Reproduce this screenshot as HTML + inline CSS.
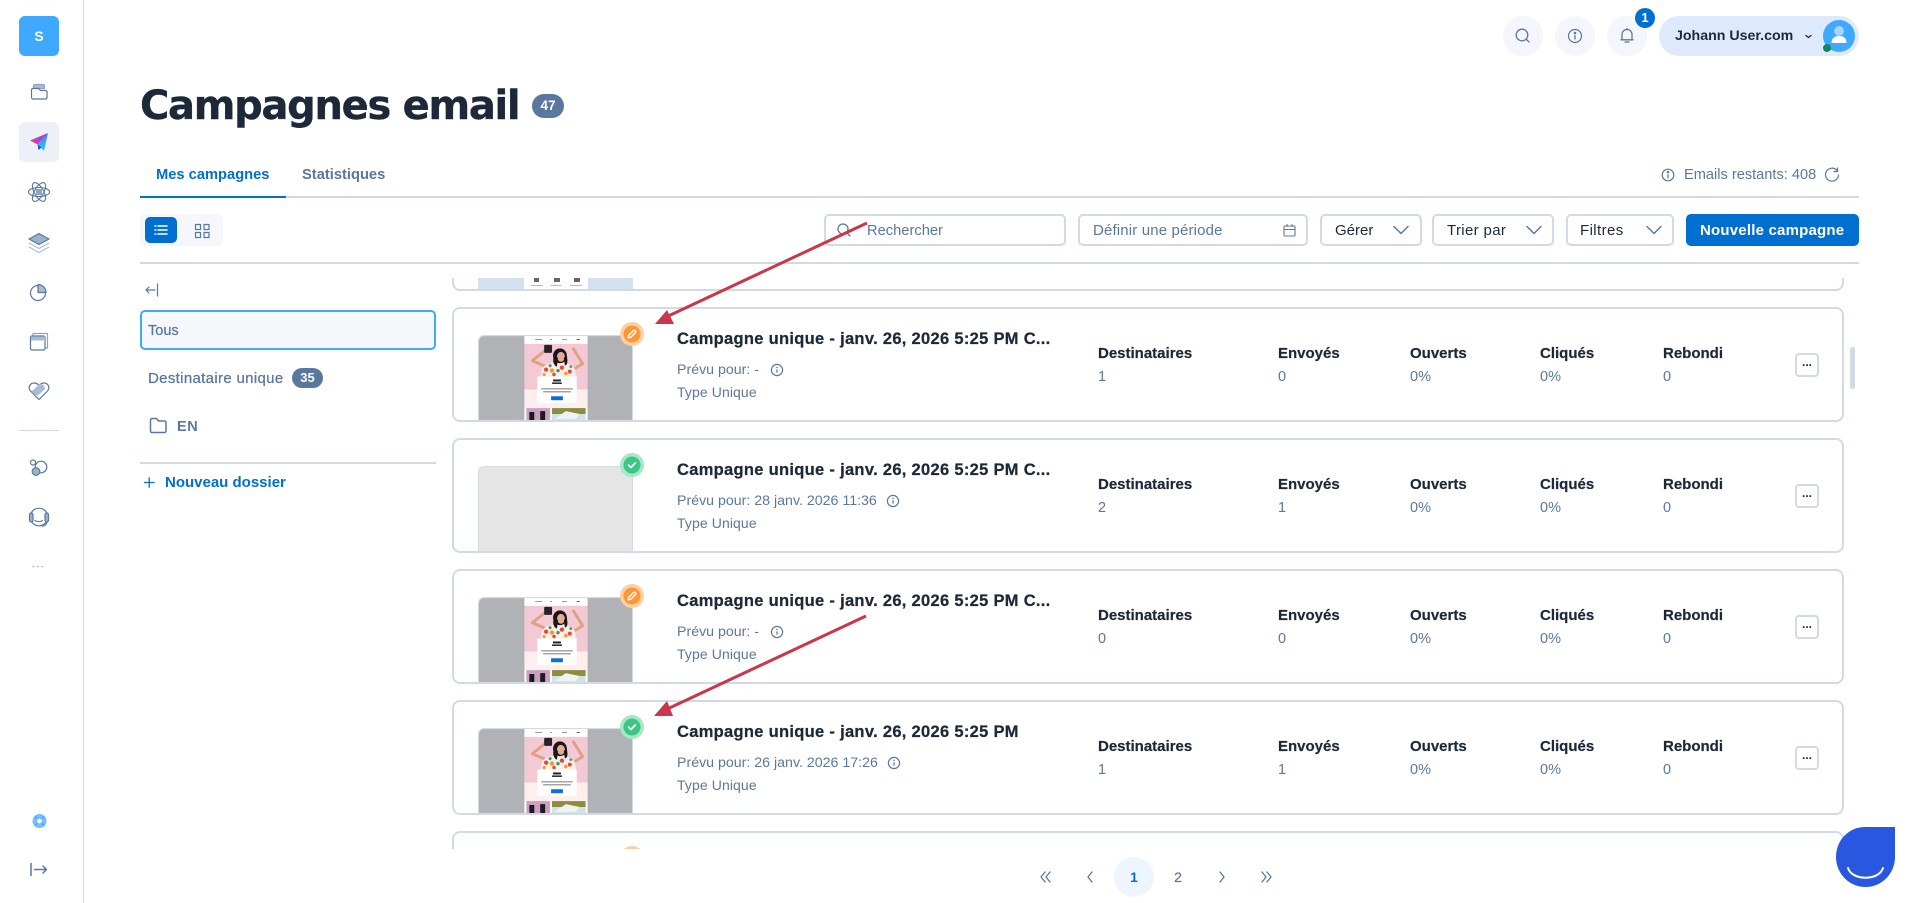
<!DOCTYPE html>
<html lang="fr"><head><meta charset="utf-8"><title>Campagnes email</title>
<style>
*{box-sizing:border-box}
html,body{margin:0;padding:0;width:1910px;height:903px;overflow:hidden;background:#fff;font-family:"Liberation Sans",sans-serif;color:#5a789e}
.t{position:absolute;white-space:nowrap;line-height:20px;height:20px}
.b{font-weight:bold}
.box{position:absolute;border:2px solid #d1dbe6;border-radius:5px;background:#fff}
.line{position:absolute;background:#d1dbe6}
.clip{position:absolute;left:0;top:278px;width:1910px;height:571px;overflow:hidden}
.c{position:absolute;left:452px;width:1392px;height:115px}
.c .bd{position:absolute;inset:0;border:2px solid #d1dbe6;border-radius:8px}
.c .th{position:absolute;left:26px;top:28px;width:155px;height:85px;display:block;border:1px solid #d1dbe6;border-bottom:0;border-radius:6px 0 0 0}
.c .ttl{left:225px;top:22px;font-size:16.5px;letter-spacing:.3px;font-weight:bold;color:#1d2939;-webkit-text-stroke:.25px #1d2939}
.c .s1{left:225px;top:53px;font-size:14.2px;color:#5a789e}
.c .s2{left:225px;top:75px;font-size:14px;letter-spacing:.1px;color:#5a789e}
.c .l{top:37px;font-size:15px;font-weight:bold;color:#1d2939;-webkit-text-stroke:.2px #1d2939}
.c .v{top:60px;font-size:14.5px;color:#5a789e}
.x1{left:646px}.x2{left:826px}.x3{left:958px}.x4{left:1088px}.x5{left:1211px}
.c .k{position:absolute;left:1343px;top:46px;width:24px;height:24px;border:2px solid #d1dbe6;border-radius:4px;background:#fff;color:#1d2939;text-align:center;font-size:12px;line-height:14px;font-weight:bold}
.c .st{position:absolute;left:168px;top:15px;display:block}
.c .in{position:absolute;top:56px;display:block}
.pill{position:absolute;background:#5a789e;color:#fff;font-weight:bold;text-align:center}
</style></head>
<body>
<svg width="0" height="0" style="position:absolute">
<defs>
<filter id="sf" x="-5%" y="-5%" width="110%" height="110%"><feGaussianBlur stdDeviation=".35"/></filter>
<symbol id="m" viewBox="0 0 155 85">
<rect width="155" height="85" fill="#b1b2b5"/>
<rect x="46" width="64" height="8" fill="#fff"/>
<g fill="#9a9a9a"><rect x="57" y="3" width="7" height="1"/><rect x="72" y="3" width="2" height="1"/><rect x="84" y="3" width="5" height="1"/><rect x="99" y="3" width="3" height="1" fill="#555"/></g>
<rect x="46" y="8" width="64" height="46" fill="#f3c9d5"/>
<rect x="46" y="54" width="64" height="19" fill="#ffeeee"/>
<g filter="url(#sf)">
<path d="M68 31 L54 25 L69 13 M97 33 L105 28 L95 12" fill="none" stroke="#dfa184" stroke-width="3" stroke-linejoin="round"/>
<rect x="66" y="9" width="8" height="8" rx="1" fill="#26232a"/>
<path d="M63 42 C62 30 68 27 80 27 C92 27 99 31 98 42 Z" fill="#f7efe8"/>
<g fill="#e5473f"><circle cx="68" cy="34" r="2.200"/><circle cx="84" cy="32" r="2.200"/><circle cx="92" cy="36" r="2"/><circle cx="76" cy="39" r="1.800"/></g>
<g fill="#f19a2d"><circle cx="74" cy="35" r="2.200"/><circle cx="88" cy="38" r="1.800"/><circle cx="66" cy="39" r="1.600"/></g>
<g fill="#3d9c6a"><circle cx="72" cy="30" r="1.600"/><circle cx="80" cy="35" r="1.800"/><circle cx="93" cy="31" r="1.400"/></g>
<ellipse cx="82" cy="20" rx="7" ry="7.500" fill="#1f1718"/>
<ellipse cx="83" cy="21" rx="4" ry="5" fill="#e3ac93"/>
<path d="M76 20 C74 26 76 30 79 31 L80 22Z M89 20 C90 26 90 29 87 30 L86 22Z" fill="#1f1718"/>
</g>
<rect x="59" y="41" width="40" height="27" fill="#fff"/>
<g filter="url(#sf)">
<g fill="#222"><rect x="75" y="44" width="8" height="2"/><rect x="74" y="47" width="10" height="1.500"/></g>
<g fill="#777"><rect x="63" y="53" width="32" height="1"/><rect x="65" y="56" width="28" height="1"/></g>
</g>
<rect x="73" y="61" width="12" height="4" fill="#0d6edb"/>
<rect x="46" y="73" width="64" height="12" fill="#fff"/>
<rect x="48" y="73" width="24" height="12" fill="#cd9fc3"/>
<g filter="url(#sf)">
<path d="M51 85V77h5v8zM62 85V76h5v9z" fill="#1b1a1b"/>
<rect x="74" y="73" width="34" height="6" fill="#8e8c3d"/>
<rect x="74" y="79" width="34" height="6" fill="#cfe2e6"/>
<path d="M76 84 L88 76 L102 79 L98 84Z" fill="#eef3f4"/>
</g>
</symbol>
<symbol id="pen" viewBox="0 0 24 24">
<circle cx="12" cy="12" r="12" fill="#fdd09f"/><circle cx="12" cy="12" r="8.500" fill="#fc973a"/>
<path d="M8.200 15.800l.6-2.600 4.700-4.700a1 1 0 0 1 1.500 0l.5.5a1 1 0 0 1 0 1.500l-4.700 4.700z" fill="none" stroke="#fff" stroke-width="1.400" stroke-linejoin="round"/>
</symbol>
<symbol id="ok" viewBox="0 0 24 24">
<circle cx="12" cy="12" r="12" fill="#a6e7c4"/><circle cx="12" cy="12" r="8.500" fill="#3cc585"/>
<path d="M8.600 12.200l2.400 2.300 4.400-4.600" fill="none" stroke="#fff" stroke-width="1.700" stroke-linecap="round" stroke-linejoin="round"/>
</symbol>
<symbol id="inf" viewBox="0 0 14 14">
<circle cx="7" cy="7" r="5.600" fill="none" stroke="#5a789e" stroke-width="1.200"/>
<path d="M7 6.400v3.200" stroke="#5a789e" stroke-width="1.300"/><circle cx="7" cy="4.400" r=".8" fill="#5a789e"/>
</symbol>
</defs>
</svg>

<!-- sidebar -->
<div class="line" style="left:83px;top:0;width:1px;height:903px"></div>
<div style="position:absolute;left:19px;top:16px;width:40px;height:40px;border-radius:6px;background:#3fa9ff;color:#fff;font-weight:bold;font-size:14px;line-height:40px;text-align:center">S</div>
<div style="position:absolute;left:19px;top:122px;width:40px;height:40px;border-radius:6px;background:#edf0f6"></div>
<div class="line" style="left:19px;top:430px;width:40px;height:1px"></div>

<!-- title -->
<div class="t" style="left:140px;top:81px;height:50px;line-height:50px;font-family:'DejaVu Sans',sans-serif;font-weight:bold;font-size:40px;letter-spacing:-1.3px;-webkit-text-stroke:.4px #1d2939;color:#1d2939">Campagnes email</div>
<div class="pill" style="left:532px;top:94px;width:32px;height:24px;border-radius:12px;font-size:13.5px;line-height:24px">47</div>

<!-- top right -->
<div style="position:absolute;left:1503px;top:16px;width:40px;height:40px;border-radius:50%;background:#f4f6fb"></div>
<div style="position:absolute;left:1555px;top:16px;width:40px;height:40px;border-radius:50%;background:#f4f6fb"></div>
<div style="position:absolute;left:1607px;top:16px;width:40px;height:40px;border-radius:50%;background:#f4f6fb"></div>
<div style="position:absolute;left:1634px;top:7px;width:22px;height:22px;border-radius:50%;background:#fff"></div>
<div style="position:absolute;left:1635px;top:8px;width:20px;height:20px;border-radius:50%;background:#006fcf;color:#fff;font-weight:bold;font-size:13px;line-height:20px;text-align:center">1</div>
<div style="position:absolute;left:1659px;top:16px;width:200px;height:40px;border-radius:20px;background:#deeafc"></div>
<div class="t b" style="left:1675px;top:26px;font-size:14.2px;color:#1d2939">Johann User.com</div>
<div style="position:absolute;left:1823px;top:20px;width:32px;height:32px;border-radius:50%;background:#3fa9ff"></div>

<!-- tabs -->
<div class="t b" style="left:156px;top:165px;font-size:14.7px;color:#006fcf">Mes campagnes</div>
<div class="t b" style="left:302px;top:165px;font-size:14.7px;color:#5a789e">Statistiques</div>
<div class="line" style="left:140px;top:196px;width:1719px;height:2px"></div>
<div style="position:absolute;left:140px;top:196px;width:146px;height:2px;background:#006fcf"></div>
<div class="t" style="left:1684px;top:165px;font-size:14.6px;color:#5a789e">Emails restants: 408</div>

<!-- toolbar -->
<div style="position:absolute;left:140px;top:214px;width:83px;height:32px;border-radius:5px;background:#f5f7fb"></div>
<div style="position:absolute;left:145px;top:217px;width:32px;height:26px;border-radius:5px;background:#006fcf"></div>
<div class="box" style="left:824px;top:214px;width:242px;height:32px"></div>
<div class="t" style="left:867px;top:221px;font-size:14.7px">Rechercher</div>
<div class="box" style="left:1078px;top:214px;width:230px;height:32px"></div>
<div class="t" style="left:1093px;top:221px;font-size:15px;letter-spacing:.15px">Définir une période</div>
<div class="box" style="left:1320px;top:214px;width:102px;height:32px"></div>
<div class="t" style="left:1335px;top:221px;font-size:15px;color:#1d2939">Gérer</div>
<div class="box" style="left:1432px;top:214px;width:122px;height:32px"></div>
<div class="t" style="left:1447px;top:221px;font-size:15px;letter-spacing:.35px;color:#1d2939">Trier par</div>
<div class="box" style="left:1566px;top:214px;width:108px;height:32px"></div>
<div class="t" style="left:1580px;top:221px;font-size:15px;letter-spacing:.4px;color:#1d2939">Filtres</div>
<div style="position:absolute;left:1686px;top:214px;width:173px;height:32px;border-radius:5px;background:#006fcf"></div>
<div class="t b" style="left:1700px;top:221px;font-size:15px;letter-spacing:.2px;color:#fff">Nouvelle campagne</div>
<div class="line" style="left:140px;top:262px;width:1719px;height:2px"></div>

<!-- left panel -->
<div style="position:absolute;left:140px;top:310px;width:296px;height:40px;border:2px solid #3fa9ff;border-radius:5px;background:#f5f7fb"></div>
<div class="t" style="left:148px;top:321px;font-size:14.5px;-webkit-text-stroke:.25px #5a789e">Tous</div>
<div class="t" style="left:148px;top:369px;font-size:15px;letter-spacing:.33px;-webkit-text-stroke:.25px #5a789e">Destinataire unique</div>
<div class="pill" style="left:292px;top:368px;width:31px;height:20px;border-radius:10px;font-size:13px;line-height:20px">35</div>
<div class="t b" style="left:177px;top:417px;font-size:14.5px;letter-spacing:.6px">EN</div>
<div class="line" style="left:140px;top:462px;width:296px;height:2px"></div>
<div class="t b" style="left:165px;top:473px;font-size:15px;color:#006fcf">Nouveau dossier</div>

<!-- list -->
<div class="clip">
  <div class="c" style="top:-102px">
    <div class="bd"></div>
    <div style="position:absolute;left:26px;top:102px;width:155px;height:11px;background:#d3e0ee"></div>
    <div style="position:absolute;left:72px;top:102px;width:64px;height:11px;background:#fff"></div>
    <svg style="position:absolute;left:72px;top:102px" width="64" height="11"><g fill="#666"><rect x="10" y="0" width="5" height="4"/><rect x="30" y="0" width="6" height="4"/><rect x="50" y="0" width="6" height="4"/></g><g fill="#bbb"><rect x="7" y="7" width="12" height="1"/><rect x="27" y="7" width="10" height="1"/><rect x="46" y="7" width="12" height="1"/></g></svg>
  </div>

  <div class="c" style="top:29px">
    <div class="bd"></div>
    <svg class="th"><use href="#m"/></svg>
    <svg class="st" width="24" height="24"><use href="#pen"/></svg>
    <div class="t ttl">Campagne unique - janv. 26, 2026 5:25 PM C...</div>
    <div class="t s1">Prévu pour: -</div><svg class="in" style="left:318px" width="14" height="14"><use href="#inf"/></svg>
    <div class="t s2">Type Unique</div>
    <div class="t l x1">Destinataires</div><div class="t v x1">1</div>
    <div class="t l x2">Envoyés</div><div class="t v x2">0</div>
    <div class="t l x3">Ouverts</div><div class="t v x3">0%</div>
    <div class="t l x4">Cliqués</div><div class="t v x4">0%</div>
    <div class="t l x5">Rebondi</div><div class="t v x5">0</div>
    <div class="k">...</div>
  </div>

  <div class="c" style="top:160px">
    <div class="bd"></div>
    <div class="th" style="background:#e5e5e5"></div>
    <svg class="st" width="24" height="24"><use href="#ok"/></svg>
    <div class="t ttl">Campagne unique - janv. 26, 2026 5:25 PM C...</div>
    <div class="t s1">Prévu pour: 28 janv. 2026 11:36</div><svg class="in" style="left:434px" width="14" height="14"><use href="#inf"/></svg>
    <div class="t s2">Type Unique</div>
    <div class="t l x1">Destinataires</div><div class="t v x1">2</div>
    <div class="t l x2">Envoyés</div><div class="t v x2">1</div>
    <div class="t l x3">Ouverts</div><div class="t v x3">0%</div>
    <div class="t l x4">Cliqués</div><div class="t v x4">0%</div>
    <div class="t l x5">Rebondi</div><div class="t v x5">0</div>
    <div class="k">...</div>
  </div>

  <div class="c" style="top:291px">
    <div class="bd"></div>
    <svg class="th"><use href="#m"/></svg>
    <svg class="st" width="24" height="24"><use href="#pen"/></svg>
    <div class="t ttl">Campagne unique - janv. 26, 2026 5:25 PM C...</div>
    <div class="t s1">Prévu pour: -</div><svg class="in" style="left:318px" width="14" height="14"><use href="#inf"/></svg>
    <div class="t s2">Type Unique</div>
    <div class="t l x1">Destinataires</div><div class="t v x1">0</div>
    <div class="t l x2">Envoyés</div><div class="t v x2">0</div>
    <div class="t l x3">Ouverts</div><div class="t v x3">0%</div>
    <div class="t l x4">Cliqués</div><div class="t v x4">0%</div>
    <div class="t l x5">Rebondi</div><div class="t v x5">0</div>
    <div class="k">...</div>
  </div>

  <div class="c" style="top:422px">
    <div class="bd"></div>
    <svg class="th"><use href="#m"/></svg>
    <svg class="st" width="24" height="24"><use href="#ok"/></svg>
    <div class="t ttl">Campagne unique - janv. 26, 2026 5:25 PM</div>
    <div class="t s1">Prévu pour: 26 janv. 2026 17:26</div><svg class="in" style="left:435px" width="14" height="14"><use href="#inf"/></svg>
    <div class="t s2">Type Unique</div>
    <div class="t l x1">Destinataires</div><div class="t v x1">1</div>
    <div class="t l x2">Envoyés</div><div class="t v x2">1</div>
    <div class="t l x3">Ouverts</div><div class="t v x3">0%</div>
    <div class="t l x4">Cliqués</div><div class="t v x4">0%</div>
    <div class="t l x5">Rebondi</div><div class="t v x5">0</div>
    <div class="k">...</div>
  </div>

  <div class="c" style="top:553px">
    <div class="bd"></div>
    <svg class="st" width="24" height="24"><use href="#pen"/></svg>
  </div>
</div>

<!-- pagination -->
<div style="position:absolute;left:1114px;top:857px;width:40px;height:40px;border-radius:50%;background:#eef5fd"></div>
<div class="t b" style="left:1114px;top:867px;width:40px;text-align:center;font-size:14px;color:#006fcf">1</div>
<div class="t" style="left:1158px;top:867px;width:40px;text-align:center;font-size:14px;color:#5a789e;-webkit-text-stroke:.25px #5a789e">2</div>

<!-- icons overlay -->
<svg style="position:absolute;left:0;top:0" width="1910" height="903" viewBox="0 0 1910 903">
<defs>
<linearGradient id="pl" x1="0" y1="0" x2="1" y2="0"><stop offset="0" stop-color="#e0409a"/><stop offset="1" stop-color="#8b3ff0"/></linearGradient>
<linearGradient id="pb" x1="0" y1="0" x2="0" y2="1"><stop offset="0" stop-color="#3a7df0"/><stop offset="1" stop-color="#2fd0f0"/></linearGradient>
</defs>
<g fill="none" stroke="#5a789e" stroke-width="1.200" stroke-linecap="round" stroke-linejoin="round">
 <!-- sidebar icons -->
 <path d="M33.500 88.500v-2.500a1.500 1.500 0 0 1 1.500-1.500h8a1.500 1.500 0 0 1 1.500 1.500v2.500z" fill="#a9bbd1" stroke="#8fa4bf"/>
 <path d="M31.500 98V90a1.500 1.500 0 0 1 1.500-1.500h5.500l2 2h5a1.500 1.500 0 0 1 1.500 1.500v5.500a1.500 1.500 0 0 1-1.500 1.500H33a1.500 1.500 0 0 1-1.500-1.500z" fill="#fff"/>
 <g transform="translate(39 192)" stroke-width="1.100"><ellipse rx="10.500" ry="4.500"/><ellipse rx="10.500" ry="4.500" transform="rotate(60)"/><ellipse rx="10.500" ry="4.500" transform="rotate(120)"/><rect x="-3" y="-3" width="6" height="6" fill="#8fa4bf" stroke="none"/></g>
 <path d="M39 233.500l10 5.500-10 5.500-10-5.500z" fill="#9db2cd"/>
 <path d="M29 243l10 5.500 10-5.500M29 247l10 5.500 10-5.500" stroke="#a9bbd1" stroke-width="1"/>
 <circle cx="38" cy="293" r="7.500"/>
 <path d="M38 284.500a8 8 0 0 1 8 8h-8z" fill="#a9bbd1"/>
 <path d="M33 336v-2.500h14.500V348H45" stroke="#8fa4bf"/>
 <rect x="30.500" y="336" width="14.500" height="14" rx="1.500" fill="#fff"/>
 <rect x="31" y="336.500" width="14" height="4" fill="#a9bbd1" stroke="none"/>
 <path d="M39 399.500l-8.500-8.500c-3-3.500-.5-8 3.500-8 2.500 0 4 1.200 5 2.500 1-1.300 2.500-2.500 5-2.500 4 0 6.500 4.500 3.500 8z"/>
 <path d="M32 391l8-7.500c3 .5 5 2.500 5 5.500l-7 6.500c-3-.5-6-2-6-4.500z" fill="#a9bbd1" stroke="none"/>
 <circle cx="33" cy="462.500" r="2.500"/>
 <circle cx="41" cy="467" r="5.800"/>
 <circle cx="36" cy="471.500" r="3.800" fill="#9db2cd"/>
 <circle cx="39" cy="517" r="8.800"/>
 <rect x="29.500" y="513" width="3.500" height="9" rx="1.700" fill="#9db2cd"/>
 <rect x="45" y="513" width="3.500" height="9" rx="1.700" fill="#9db2cd"/>
 <path d="M35 520.500c2 1.500 5 1.500 7.500 0"/>
 <path d="M47 522c0 2-2 4-5 4"/>
 <path d="M33 566.500h.6M37.500 566.500h.6M42 566.500h.6" stroke="#a8b9cf" stroke-width="1.400"/>
 <path d="M31 863.500v12" stroke-width="1.500"/>
 <path d="M34.500 869.500h12M43 866l3.500 3.500-3.500 3.500" stroke-width="1.500"/>
 <!-- back arrow panel -->
 <path d="M157.500 284v12" stroke-width="1.200"/>
 <path d="M146 290h9M149 287l-3 3 3 3" stroke-width="1.200"/>
 <!-- folder -->
 <path d="M150.500 431v-11a1.500 1.500 0 0 1 1.500-1.500h4.500l2 2.500h6a1.500 1.500 0 0 1 1.500 1.500v8.500a1.500 1.500 0 0 1-1.500 1.500H152a1.500 1.500 0 0 1-1.500-1.500z" stroke-width="1.500"/>
 <!-- plus -->
 <path d="M144.500 482.500h9.500M149.200 477.800v9.500" stroke="#006fcf" stroke-width="1.300"/>
 <!-- topbar icons -->
 <circle cx="1522" cy="35" r="5.800" stroke-width="1.300"/><path d="M1526.500 39.500l2.500 2.500" stroke-width="1.300"/>
 <circle cx="1575" cy="36" r="6.500" stroke-width="1.200"/><path d="M1575 35.500v3.500" stroke-width="1.300"/><circle cx="1575" cy="33" r=".7" fill="#5a789e"/>
 <path d="M1622 39.500v-5a5 5 0 0 1 10 0v5M1621 39.800h12M1625 42h4M1627 28.500v1" stroke-width="1.300"/>
 <path d="M1806 35.500l2.500 2 2.500-2" stroke="#1d2939" stroke-width="1.300"/>
 <circle cx="1668" cy="175" r="5.800" stroke-width="1.200"/><path d="M1668 174.500v3.500" stroke-width="1.200"/><circle cx="1668" cy="172" r=".7" fill="#5a789e"/>
 <path d="M1837 170.500a6.500 6.500 0 1 0 1.500 4.500M1837.500 168v3.500h-3.500" stroke-width="1.200"/>
 <!-- toolbar icons -->
 <path d="M158 226h9M158 230h9M158 234h9M155 226h.8M155 230h.8M155 234h.8" stroke="#fff" stroke-width="1.500"/>
 <rect x="195.500" y="224.500" width="5" height="5" stroke-width="1.200"/><rect x="204" y="224.500" width="5" height="5" stroke-width="1.200"/><rect x="195.500" y="232.500" width="5" height="5" stroke-width="1.200"/><rect x="204" y="232.500" width="5" height="5" stroke-width="1.200"/>
 <circle cx="843" cy="229" r="5" stroke-width="1.300"/><path d="M847 233l3 3" stroke-width="1.300"/>
 <rect x="1284" y="226" width="11" height="10" rx="1" stroke-width="1.100"/><path d="M1284 229.500h11M1287 224.500v2M1292 224.500v2" stroke-width="1.100"/>
 <path d="M1394 226.500l7 7 7-7M1527 226.500l7 7 7-7M1647 226.500l7 7 7-7" stroke-width="1.500"/>
 <!-- pagination -->
 <path d="M1045 872l-4 5 4 5M1050 872l-4 5 4 5M1092 872l-4 5 4 5M1220 872l4 5-4 5M1262 872l4 5-4 5M1267 872l4 5-4 5" stroke-width="1.300"/>
</g>
<!-- scrollbar -->
<rect x="1850" y="347" width="5" height="42" rx="2.500" fill="#d1dbe6"/>
<!-- plane -->
<path d="M30 140.500L48 133 37.500 144.500z" fill="url(#pl)"/>
<path d="M37.500 144.500L48 133 44 151z" fill="url(#pb)"/>
<path d="M37.500 144.500l1 5.500 3-2.500z" fill="#1b56c7"/>
<!-- life ring -->
<circle cx="39.500" cy="821" r="7" fill="#74bfff"/><circle cx="39.500" cy="821" r="2.300" fill="#fff"/>
<path d="M35 816.500l2 2M44 816.500l-2 2M35 825.500l2-2M44 825.500l-2-2" stroke="#3fa9ff" stroke-width="1.500"/>
<!-- avatar -->
<circle cx="1839" cy="31" r="5" fill="#a5d4ff"/>
<path d="M1831.500 43c0-5 3-7 7.500-7s7.500 2 7.500 7z" fill="#fff"/>
<circle cx="1827" cy="48" r="4" fill="#0f8a5a"/>
<!-- chat bubble -->
<path d="M1895 827v30a29.500 30 0 1 1-59 0c0-17 13-30 29-30z" fill="#2957e0"/>
<path d="M1848 868c4 13 31 13 35 0" fill="none" stroke="#fff" stroke-width="2" stroke-linecap="round"/>
<!-- annotation arrows -->
<path d="M867 223L664 318" stroke="#c8374a" stroke-width="3" fill="none"/>
<path d="M655 324l12-14 7 14z" fill="#c8374a"/>
<path d="M866 616L663 711" stroke="#c8374a" stroke-width="3" fill="none"/>
<path d="M654 716l13-15 6 15z" fill="#c8374a"/>
</svg>
</body></html>
